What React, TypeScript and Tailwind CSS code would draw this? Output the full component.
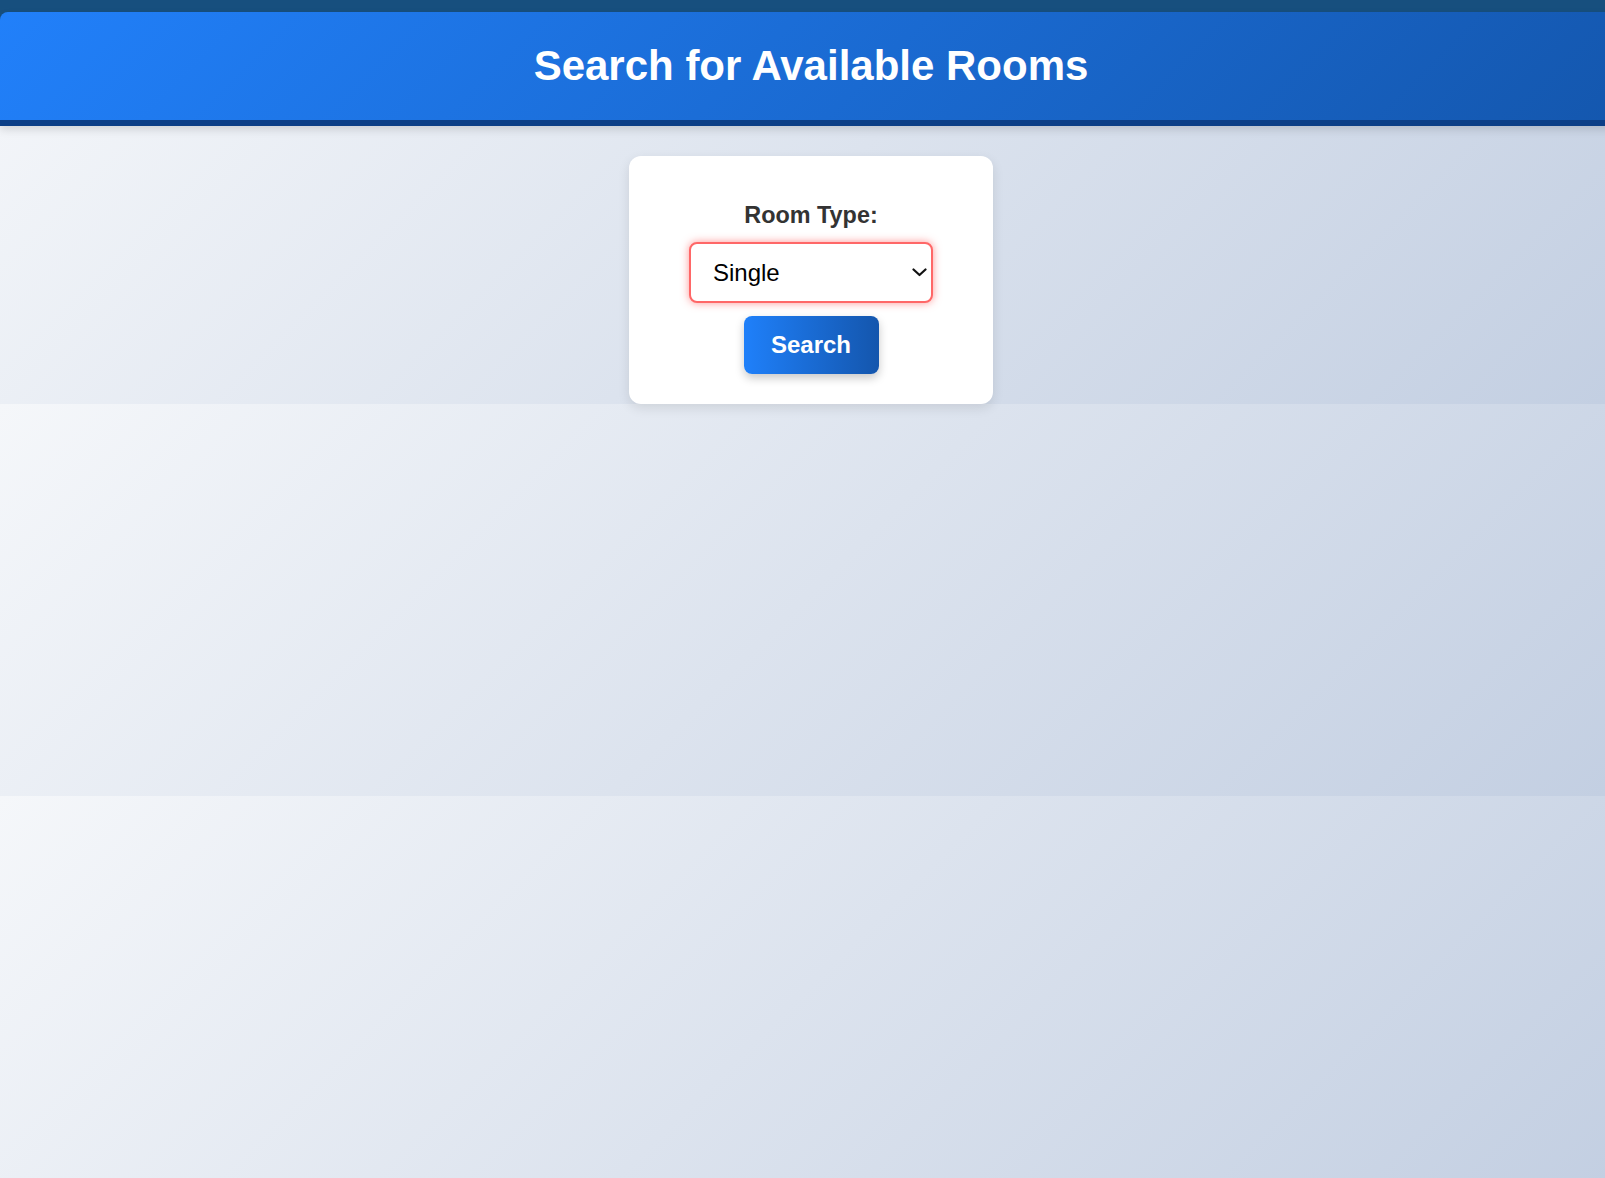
import { useState } from 'react';

const rooms = ['Single', 'Double', 'Suite'];

export default function App() {
  const [roomType, setRoomType] = useState('Single');

  return (
    <div className="min-h-screen w-full overflow-hidden bg-[linear-gradient(135deg,#f5f7fa_0%,#c3cfe2_100%)] bg-[length:100%_392px] bg-[position:0_12px] bg-repeat font-['Liberation_Sans',Arial,sans-serif]">
      <div className="w-[1622px]">
        <div className="bg-[#174f7e] pt-3">
          <header className="rounded-t-lg border-b-[6px] border-[#0c3f87] bg-[linear-gradient(135deg,#2180fa_0%,#1457ae_100%)] py-[30px] text-center shadow-[0_4px_8px_rgba(0,0,0,0.12)]">
            <h1 className="text-[42px] font-bold leading-[48px] text-white">Search for Available Rooms</h1>
          </header>
        </div>

        <main className="flex justify-center pt-[30px]">
          <form
            className="flex w-[364px] flex-col items-center rounded-xl bg-white pt-[46px] pb-[30px] shadow-[0_4px_12px_rgba(0,0,0,0.1)]"
            onSubmit={(e) => e.preventDefault()}
          >
            <label htmlFor="roomType" className="mb-[13px] text-[23.4px] font-bold leading-[27px] text-[#333333]">
              Room Type:
            </label>
            <div className="relative">
              <select
                id="roomType"
                value={roomType}
                onChange={(e) => setRoomType(e.target.value)}
                className="h-[61px] w-[244px] appearance-none rounded-lg border-2 border-[#ff6767] bg-white pl-[22px] text-[24px] text-black shadow-[0_0_8px_rgba(255,80,80,0.6)] outline-none"
              >
                {rooms.map((r) => (
                  <option key={r} value={r}>
                    {r}
                  </option>
                ))}
              </select>
              <svg
                className="pointer-events-none absolute right-[6px] top-[26px]"
                width="15"
                height="9"
                viewBox="0 0 15 9"
                fill="none"
              >
                <path d="M1.5 1.5 L7.5 7 L13.5 1.5" stroke="#111" strokeWidth="2.2" strokeLinecap="round" strokeLinejoin="round" />
              </svg>
            </div>
            <button
              type="submit"
              className="mt-[13px] h-[58px] w-[135px] rounded-lg bg-[linear-gradient(90deg,#1f80fa_0%,#1456ad_100%)] text-[24px] font-bold text-white shadow-[0_4px_10px_rgba(0,0,0,0.22)]"
            >
              Search
            </button>
          </form>
        </main>
      </div>
    </div>
  );
}
